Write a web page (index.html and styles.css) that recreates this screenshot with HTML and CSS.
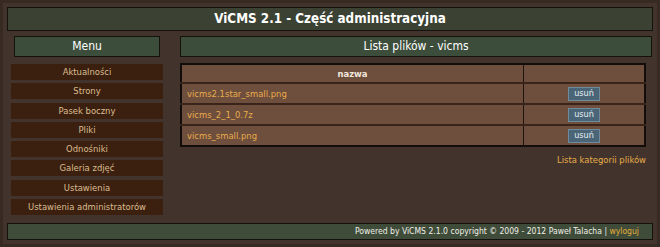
FILE: index.html
```html
<!DOCTYPE html>
<html lang="pl">
<head>
<meta charset="utf-8">
<title>ViCMS 2.1 - Część administracyjna</title>
<link rel="stylesheet" href="styles.css">
</head>
<body>
<div class="page">
  <div class="top">ViCMS 2.1 - Część administracyjna</div>
  <div class="main">
    <div class="side">
      <div class="side-head">Menu</div>
      <ul class="menu">
        <li><a href="#">Aktualności</a></li>
        <li><a href="#">Strony</a></li>
        <li><a href="#">Pasek boczny</a></li>
        <li><a href="#">Pliki</a></li>
        <li><a href="#">Odnośniki</a></li>
        <li><a href="#">Galeria zdjęć</a></li>
        <li><a href="#">Ustawienia</a></li>
        <li><a href="#">Ustawienia administratorów</a></li>
      </ul>
    </div>
    <div class="content">
      <div class="content-head">Lista plików - vicms</div>
      <table class="files">
        <tr><th class="c-name">nazwa</th><th class="c-act"></th></tr>
        <tr><td><a href="#">vicms2.1star_small.png</a></td><td class="act"><button class="btn">usuń</button></td></tr>
        <tr><td><a href="#">vicms_2_1_0.7z</a></td><td class="act"><button class="btn">usuń</button></td></tr>
        <tr><td><a href="#">vicms_small.png</a></td><td class="act"><button class="btn">usuń</button></td></tr>
      </table>
      <div class="more"><a href="#">Lista kategorii plików</a></div>
    </div>
  </div>
  <div class="foot">Powered by ViCMS 2.1.0 copyright © 2009 - 2012 Paweł Talacha | <a href="#">wyloguj</a></div>
</div>
</body>
</html>
```

FILE: styles.css
```css
html, body {
  margin: 0;
  padding: 0;
}
body {
  background: #372a23;
  font-family: "DejaVu Sans Condensed", "DejaVu Sans", sans-serif;
  font-size: 9.4px;
  color: #e8e0d0;
}
.page {
  margin: 3px;
  height: 241px;
  box-sizing: border-box;
  background: #42342c;
  padding: 4px 4px 0 4px;
  display: flex;
  flex-direction: column;
}
.top {
  height: 22px;
  background: #3b4233;
  border: 1px solid #15120e;
  color: #ffffff;
  font-weight: bold;
  font-size: 13.3px;
  line-height: 22px;
  text-align: center;
}
.main {
  display: flex;
  gap: 17px;
  margin-top: 5px;
  height: 181px;
}
.side {
  width: 152px;
  margin-left: 4px;
}
.side-head, .content-head {
  height: 19px;
  background: #3d4d3b;
  border: 1px solid #15120e;
  color: #ffffff;
  font-size: 12px;
  line-height: 19px;
  text-align: center;
}
.side-head {
  margin: 0 3px;
}
.menu {
  list-style: none;
  margin: 7px 0 0 0;
  padding: 0;
  display: flex;
  flex-direction: column;
  gap: 3.3px;
}
.menu li a {
  display: block;
  height: 16px;
  line-height: 16px;
  background: #3b200f;
  color: #dcbd90;
  text-align: center;
  text-decoration: none;
}
.content {
  width: 472px;
  display: flex;
  flex-direction: column;
}
.files {
  margin-top: 6px;
  width: 466px;
  border-collapse: collapse;
  border: 2px solid #120d0a;
  background: #6e4e3d;
}
.files th, .files td {
  border-top: 2px solid #3a2419;
  padding: 0 5px;
  height: 19px;
}
.files th {
  border-top: 0;
  height: 17px;
  font-weight: bold;
  color: #f0e8dc;
  text-align: center;
}
.files .c-act, .files .act {
  width: 110px;
  border-left: 1px solid #1d1410;
  text-align: center;
}
.files td a {
  color: #e8ac4b;
  text-decoration: none;
}
.btn {
  font-family: inherit;
  font-size: 9px;
  color: #e6eef2;
  background: #4a6578;
  border: 1px solid #6f8a9a;
  padding: 0 5px;
  height: 14px;
  line-height: 11px;
  margin: 0;
  vertical-align: middle;
}
.more {
  margin-top: 7px;
  width: 466px;
  text-align: right;
}
.more a {
  color: #e8ac4b;
  text-decoration: none;
}
.foot {
  height: 15px;
  background: #3f4c39;
  border: 1px solid #15120e;
  color: #f0f0e8;
  font-size: 8.55px;
  line-height: 15px;
  text-align: right;
  padding-right: 13px;
  margin-top: 6px;
}
.foot a {
  color: #e2ac3a;
  text-decoration: none;
}
```
